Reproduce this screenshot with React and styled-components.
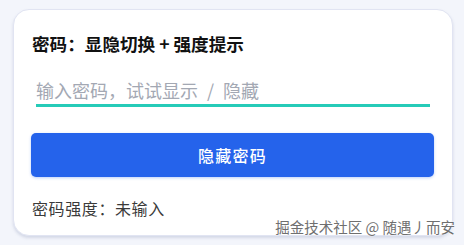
import React, { useState } from "react";
import styled, { createGlobalStyle } from "styled-components";

const Global = createGlobalStyle`
  html, body { margin: 0; padding: 0; background: #f3f5fb; }
  body { font-family: "Noto Sans CJK SC", "Noto Sans", sans-serif; }
  * { box-sizing: border-box; }
`;

const Page = styled.div`
  position: relative;
  width: 464px;
  height: 245px;
  padding: 9px 11px 0 13px;
  overflow: hidden;
`;

const Card = styled.div`
  width: 440px;
  height: 227px;
  background: #ffffff;
  border: 1px solid #e1e4f2;
  border-radius: 16px;
  box-shadow: 0 2px 3px rgba(120, 130, 170, 0.25);
  padding: 20px 18px 15px 17px;
  display: flex;
  flex-direction: column;
`;

const Title = styled.h3`
  margin: 0;
  font-size: 17.6px;
  line-height: 27px;
  font-weight: 700;
  color: #111111;
  padding-left: 1px;
`;

const Input = styled.input`
  display: block;
  margin: 19px 4px 0 5px;
  height: 31px;
  padding: 0;
  border: none;
  border-bottom: 3px solid #26cbb8;
  outline: none;
  background: transparent;
  font-family: inherit;
  font-size: 18px;
  color: #222;
  &::placeholder {
    color: #a3a8b3;
  }
`;

const Button = styled.button`
  margin-top: 26px;
  height: 44px;
  border: none;
  border-radius: 5px;
  background: #2563eb;
  color: #ffffff;
  font-family: inherit;
  font-size: 16px;
  font-weight: 500;
  letter-spacing: 1.3px;
  box-shadow: 0 1px 3px rgba(37, 99, 235, 0.3);
  cursor: pointer;
`;

const Status = styled.div`
  margin-top: 19px;
  font-size: 16px;
  line-height: 24px;
  letter-spacing: 0.6px;
  color: #3a3a3a;
  padding-left: 1px;
`;

const Watermark = styled.div`
  position: absolute;
  right: 9px;
  bottom: 8px;
  font-size: 14.5px;
  line-height: 20px;
  color: #6f6f6f;
  text-shadow: 0 0 2px #ffffff, 0 0 1px #ffffff;
  white-space: nowrap;
`;

export default function App() {
  const [value, setValue] = useState("");
  const [visible, setVisible] = useState(true);
  return (
    <Page>
      <Global />
      <Card>
        <Title>密码：显隐切换 + 强度提示</Title>
        <Input
          type={visible ? "text" : "password"}
          value={value}
          onChange={(e) => setValue(e.target.value)}
          placeholder={"输入密码，试试显示\u2002/\u2002隐藏"}
        />
        <Button onClick={() => setVisible((v) => !v)}>
          {visible ? "隐藏密码" : "显示密码"}
        </Button>
        <Status>密码强度：{value ? "已输入" : "未输入"}</Status>
      </Card>
      <Watermark>掘金技术社区 @ 随遇丿而安</Watermark>
    </Page>
  );
}
